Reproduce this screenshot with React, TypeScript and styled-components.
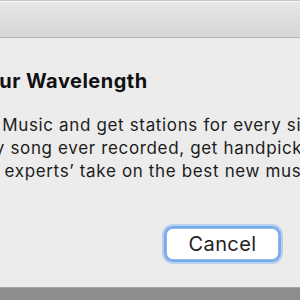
import React from "react";
import styled, { createGlobalStyle } from "styled-components";

const GlobalStyle = createGlobalStyle`
  html, body {
    margin: 0;
    padding: 0;
    width: 300px;
    height: 300px;
    overflow: hidden;
    background: #ececec;
    font-family: Inter, "Liberation Sans", sans-serif;
    -webkit-font-smoothing: antialiased;
  }
`;

const Window = styled.div`
  width: 300px;
  height: 300px;
  display: flex;
  flex-direction: column;
  overflow: hidden;
  background: #ececec;
`;

const TitleBar = styled.div`
  flex: 0 0 36px;
  border-top: 1px solid #c6c6c6;
  border-bottom: 1px solid #b2b2b2;
  background: linear-gradient(#ebebeb 0%, #e4e4e4 15%, #d6d6d6 100%);
  box-shadow: inset 0 1px 0 #f6f6f6;
`;

const Body = styled.div`
  flex: 1;
  display: flex;
  flex-direction: column;
  padding: 31px 21px 27px 0;
  min-height: 0;
`;

/* The alert's message column starts left of the visible crop. */
const Message = styled.div`
  margin-left: -92px;
  white-space: nowrap;
`;

const Heading = styled.h1`
  margin: 0;
  font-size: 20px;
  line-height: 24px;
  font-weight: 700;
  letter-spacing: 0.5px;
  color: #111;
`;

const Text = styled.p`
  margin: 20.5px 0 0;
  font-size: 17px;
  line-height: 23px;
  font-weight: 400;
  letter-spacing: 0.65px;
  color: #1c1c1c;
`;

const Footer = styled.div`
  margin-top: auto;
  display: flex;
  justify-content: flex-end;
`;

const Button = styled.button`
  width: 113px;
  height: 32px;
  padding: 0;
  border: 1px solid #8fb8ec;
  border-radius: 7px;
  background: #ffffff;
  font-family: Inter, "Liberation Sans", sans-serif;
  font-size: 20px;
  line-height: 30px;
  letter-spacing: 0.4px;
  color: #222;
  box-shadow: 0 0 0 2px rgba(111, 164, 234, 0.85), 0 0 0 4px rgba(140, 185, 240, 0.55);
  outline: none;
`;

const Dock = styled.div`
  flex: 0 0 12px;
  background: #8d8d8d;
  border-top: 1px solid #a3a3a3;
`;

export default function App() {
  return (
    <>
      <GlobalStyle />
      <Window>
        <TitleBar />
        <Body>
          <Message>
            <Heading>Catch Your Wavelength</Heading>
            <Text>
              Use Apple Music and get stations for every single mood, and
              <br />
              access any song ever recorded, get handpicked playlists,
              <br />
              and all our experts’ take on the best new music.
            </Text>
          </Message>
          <Footer>
            <Button>Cancel</Button>
          </Footer>
        </Body>
        <Dock />
      </Window>
    </>
  );
}
